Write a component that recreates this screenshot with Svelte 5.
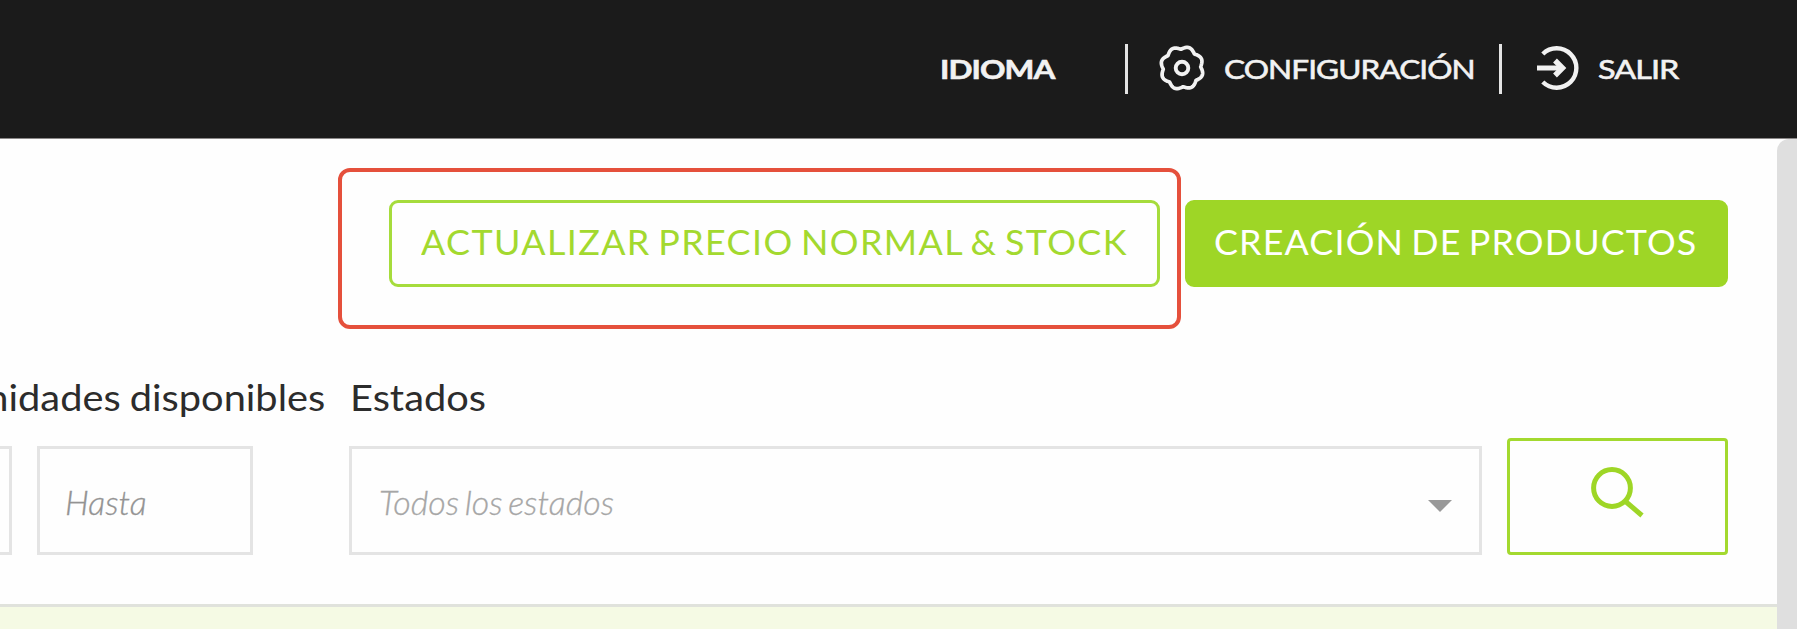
<script lang="ts">
    // Gear outline: eight rounded teeth with tight notches, sampled into a closed path
    const steps = 240;
    const gearPath = Array.from({ length: steps }, (_, i) => {
        const a = (i / steps) * Math.PI * 2;
        const wave = Math.sin(4 * (a + 0.06));
        const r = 18.7 + 1.9 * Math.abs(wave) + 0.9 * wave * wave;
        const x = 24 + r * Math.cos(a);
        const y = 24 + r * Math.sin(a);
        return `${i === 0 ? 'M' : 'L'}${x.toFixed(2)} ${y.toFixed(2)}`;
    }).join('') + 'Z';
</script>

<div class="page">
    <header class="topbar">
        <div class="language"><span class="nav-text">IDIOMA</span></div>
        <span class="divider"></span>
        <a class="nav-link config" href="#configuracion">
            <svg width="48" height="48" viewBox="0 0 48 48" fill="none" stroke="currentColor" aria-hidden="true">
                <path d={gearPath} stroke-width="3.7" stroke-linejoin="round" />
                <circle cx="24" cy="24" r="6.3" stroke-width="3.9" />
            </svg>
            <span class="nav-text">CONFIGURACIÓN</span>
        </a>
        <span class="divider"></span>
        <a class="nav-link exit" href="#salir">
            <svg width="48" height="48" viewBox="0 0 48 48" fill="none" stroke="currentColor" aria-hidden="true">
                <path d="M11.8 10A19.7 19.7 0 1 1 11.8 38" stroke-width="4.4" />
                <path d="M6 24H30" stroke-width="5" />
                <path d="M24 16.5L31.5 24L24 31.5" stroke-width="5.4" />
            </svg>
            <span class="nav-text">SALIR</span>
        </a>
    </header>

    <div class="body">
        <main class="content">
            <div class="actions">
                <div class="highlight">
                    <button class="btn outline"><span>ACTUALIZAR PRECIO NORMAL &amp; STOCK</span></button>
                </div>
                <button class="btn solid"><span>CREACIÓN DE PRODUCTOS</span></button>
            </div>

            <div class="filters">
                <div class="units">
                    <div class="label"><span>nidades disponibles</span></div>
                    <div class="range">
                        <div class="field from"></div>
                        <div class="field to"><span class="placeholder hint">Hasta</span></div>
                    </div>
                </div>
                <div class="status">
                    <div class="label"><span>Estados</span></div>
                    <div class="field select">
                        <span class="placeholder">Todos los estados</span>
                        <svg class="caret" width="24" height="12" viewBox="0 0 24 12" aria-hidden="true">
                            <path d="M0 0H24L12 12Z" fill="#999" />
                        </svg>
                    </div>
                </div>
                <button class="search" aria-label="Buscar">
                    <svg width="56" height="56" viewBox="0 0 56 56" fill="none" stroke="currentColor" stroke-width="5" aria-hidden="true">
                        <circle cx="24" cy="24" r="18.4" />
                        <path d="M37 37L54 51.5" />
                    </svg>
                </button>
            </div>

            <div class="table-head"></div>
        </main>
        <div class="scrollbar"></div>
    </div>
</div>

<style>
    :global(body) { margin: 0; background: #fff; }
    .page {
        display: flex;
        flex-direction: column;
        width: 1797px;
        height: 629px;
        overflow: hidden;
        box-sizing: border-box;
        font-family: Lato, "Open Sans", sans-serif;
        background: #fefefe;
    }
    .page * { box-sizing: border-box; }

    .topbar {
        display: flex;
        flex: none;
        align-items: center;
        height: 139px;
        padding-left: 940px;
        color: #f2f2f2;
        background: #1b1b1b;
        border-bottom: 1px solid #8b8888;
    }
    /* wide, tightly set capitals */
    .nav-text {
        display: inline-block;
        font-size: 27.5px;
        line-height: 40px;
        white-space: nowrap;
        letter-spacing: -0.8px;
        transform: scaleX(1.147);
        transform-origin: left;
        -webkit-text-stroke: 0.6px currentColor;
    }
    .language { width: 185px; font-weight: 700; }
    .divider { flex: none; width: 3px; height: 50px; background: #e4e4e4; }
    .nav-link {
        display: flex;
        align-items: center;
        color: inherit;
        text-decoration: none;
    }
    .nav-link svg { margin-bottom: 2px; }
    .config { width: 371px; padding-left: 30px; gap: 18px; }
    .exit { padding-left: 29px; gap: 19px; }
    .exit .nav-text { transform: scaleX(1.18); }
    svg { display: block; flex: none; }

    .body { display: flex; flex: 1; min-height: 0; }
    .content { width: 1777px; min-width: 0; }
    .scrollbar { width: 20px; background: #dfdfdf; border-top-left-radius: 12px; }

    .actions { display: flex; height: 190px; padding: 29px 0 0 338px; gap: 4px; }
    .highlight {
        width: 843px;
        height: 161px;
        padding: 28px 0 0 47px;
        border: 4px solid #e5503c;
        border-radius: 12px;
    }
    .btn {
        height: 87px;
        padding: 0;
        font: 400 34.5px/40px Lato, sans-serif;
        white-space: nowrap;
        text-align: left;
        border: 3px solid #a6dc3c;
        border-radius: 9px;
    }
    .btn span {
        display: block;
        margin-top: -3px;
        letter-spacing: 1.35px;
        word-spacing: -3px;
        transform: scaleX(1.04);
        transform-origin: left;
    }
    .outline { width: 771px; padding-left: 29px; color: #a3d92f; background: #fefefe; }
    .solid {
        width: 543px;
        margin-top: 32px;
        padding-left: 26px;
        color: #fff;
        background: #9ed626;
        border-color: #9ed626;
    }
    .solid span { letter-spacing: 1.1px; }

    .filters { display: flex; height: 275px; }
    .units { width: 349px; }
    .status { width: 1133px; }
    .label {
        display: flex;
        height: 117px;
        padding-top: 46px;
        font-size: 37px;
        line-height: 44px;
        color: #2c2c2c;
        white-space: nowrap;
    }
    .label span {
        transform: scaleX(1.075);
        transform-origin: left;
        word-spacing: -1px;
    }
    .units .label { justify-content: flex-end; padding-right: 24px; }
    .units .label span { transform-origin: right; }
    .status .label { padding-left: 1px; }
    .range { display: flex; gap: 25px; }
    .field {
        display: flex;
        align-items: center;
        height: 109px;
        border: 3px solid #e4e4e4;
    }
    .from { width: 12px; border-left: 0; }
    .to { width: 216px; padding-left: 25px; }
    .select { justify-content: space-between; padding: 0 27px; }
    .caret { margin-top: 10px; }
    .placeholder {
        padding-top: 2px;
        font-size: 34px;
        font-style: italic;
        font-weight: 300;
        line-height: 40px;
        word-spacing: -3px;
        color: #a6a6a6;
        white-space: nowrap;
        -webkit-text-stroke: 0.3px currentColor;
    }
    .hint { color: #939393; }
    .search {
        display: flex;
        align-items: flex-start;
        width: 221px;
        height: 117px;
        margin: 109px 0 0 25px;
        padding: 23px 0 0 78px;
        color: #9ed626;
        background: #fefefe;
        border: 3px solid #a3d92f;
        border-radius: 4px;
    }
    .table-head { height: 30px; background: #f5fae4; border-top: 3px solid #e0e2dc; }
</style>
